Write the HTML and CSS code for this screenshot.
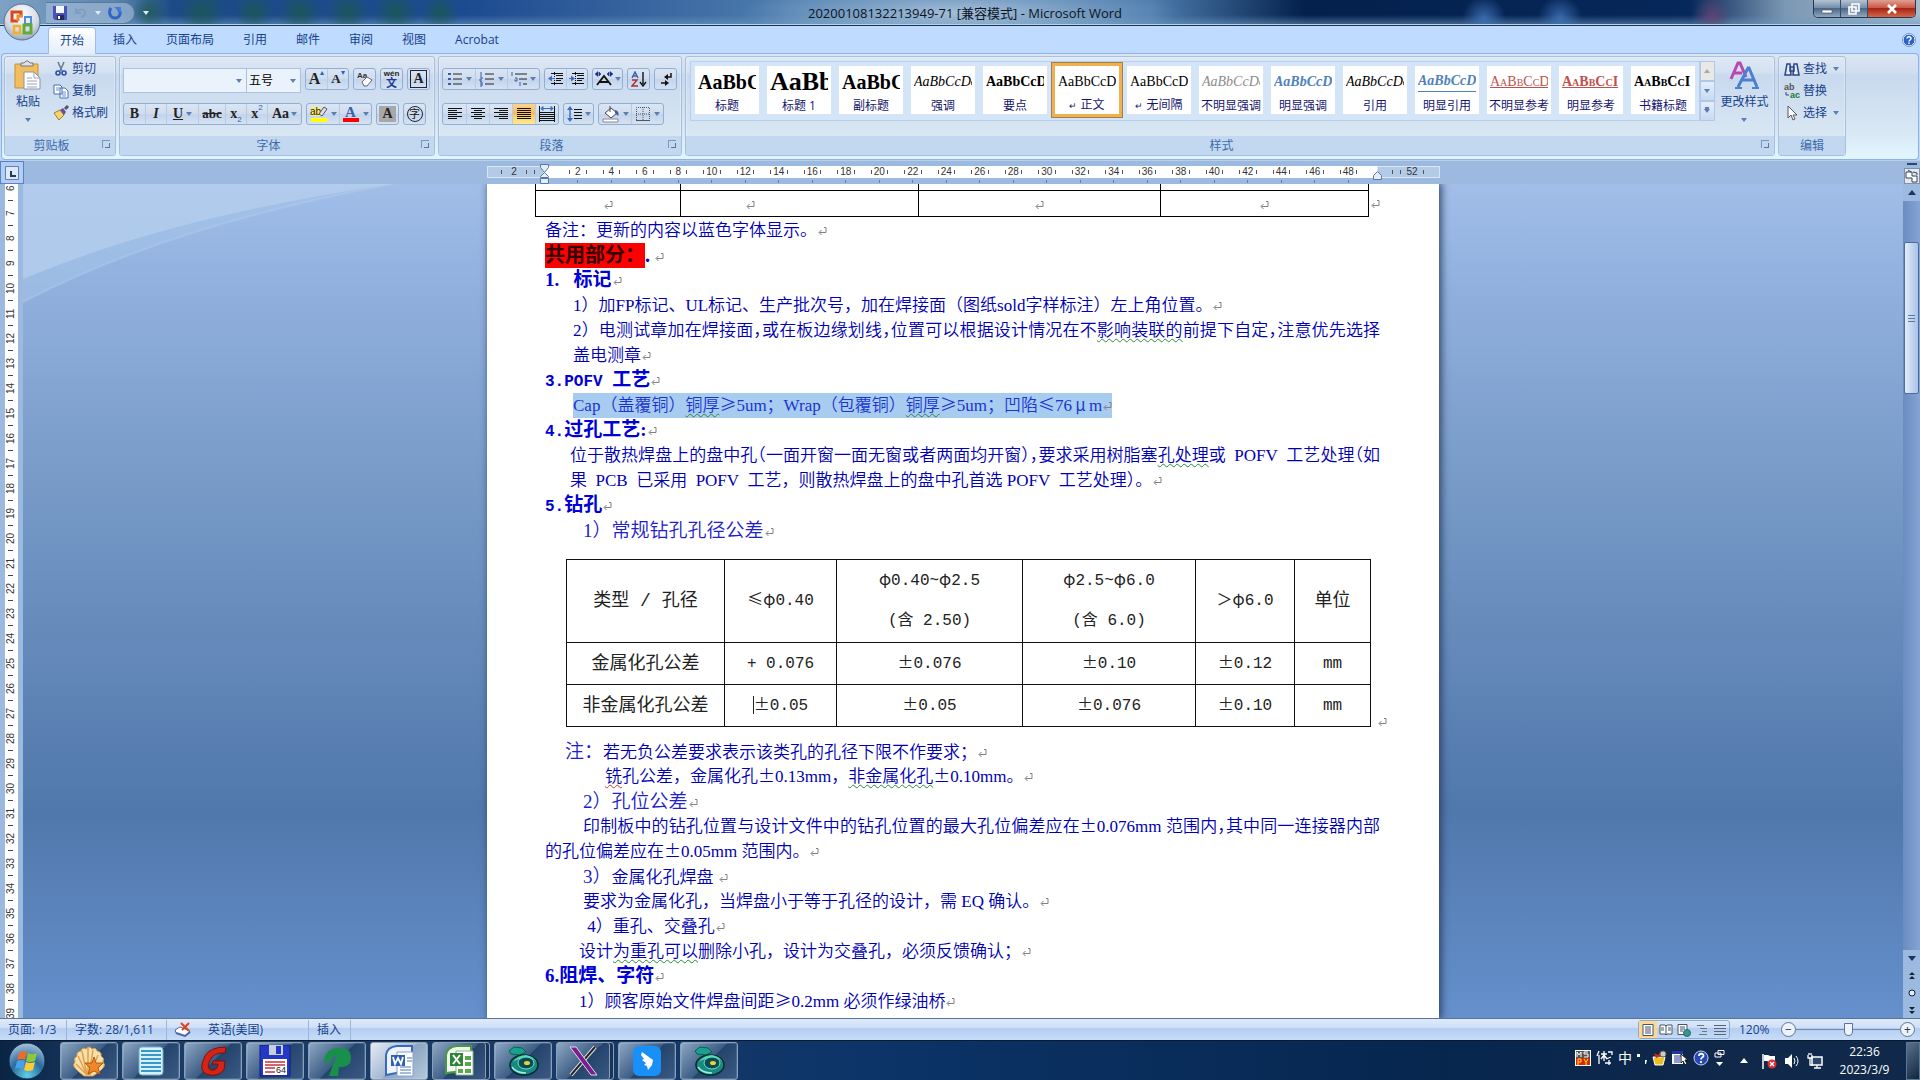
FILE: index.html
```html
<!DOCTYPE html>
<html lang="zh-CN">
<head>
<meta charset="utf-8">
<title>20200108132213949-71 [兼容模式] - Microsoft Word</title>
<link rel="stylesheet" href="styles.css">
</head>
<body>
<header class="titlebar">
  <div class="qat">
    <button aria-label="保存"><svg width="14" height="14" viewBox="0 0 14 14"><path d="M0 0h14v14H2l-2-2z" fill="#4a52b8"/><path d="M3 0h8v7H3z" fill="#f4f6ff"/><path d="M4 9h7v5H4z" fill="#222a60"/><path d="M5 10h2v3H5z" fill="#fff"/></svg></button>
    <button aria-label="撤消"><svg width="14" height="14" viewBox="0 0 14 14"><path d="M2 2v5h5M3 6c3-4 9-3 8 2-1 2-3 3-4 3" fill="none" stroke="#7f9cc4" stroke-width="2"/></svg></button>
    <i class="dd light"></i>
    <button aria-label="恢复"><svg width="14" height="14" viewBox="0 0 14 14"><path d="M3 2c-3 4-1 10 4 10s7-6 3-9" fill="none" stroke="#2f66c8" stroke-width="3"/><path d="M6 1h7v6z" fill="#3f7ae0"/></svg></button>
  </div>
  <i class="dd light bar"></i>
  <h1>20200108132213949-71 [兼容模式] - Microsoft Word</h1>
  <div class="winbtns">
    <button aria-label="最小化"><svg width="12" height="12" viewBox="0 0 12 12"><path d="M1 7h10v3H1z" fill="#fff" stroke="#445" stroke-width=".6"/></svg></button>
    <button aria-label="还原"><svg width="12" height="12" viewBox="0 0 12 12"><path d="M4 1h7v7H4zM1 4h7v7H1z" fill="#8fa3b8" stroke="#fff" stroke-width="1.6"/></svg></button>
    <button class="close" aria-label="关闭"><svg width="12" height="12" viewBox="0 0 12 12"><path d="M2 2l8 8M10 2l-8 8" stroke="#fff" stroke-width="2.6"/></svg></button>
  </div>
</header>
<button class="orb" aria-label="Office 按钮"><svg width="38" height="38" viewBox="0 0 38 38"><defs><radialGradient id="og" cx=".5" cy=".3" r=".75"><stop offset="0" stop-color="#fff"/><stop offset=".6" stop-color="#d4dbe6"/><stop offset="1" stop-color="#8e9db5"/></radialGradient></defs><circle cx="19" cy="19" r="18" fill="url(#og)" stroke="#5e6f8c"/><g fill="none" stroke-width="3"><path d="M18 12v-3h-9v9h6" stroke="#d8481c"/><path d="M15 18v-5h5" stroke="#ec8a2a"/><path d="M22 14h6v7h-6z" stroke="#4f8fd8" stroke-width="2"/><path d="M11 23h6v7h-6z" stroke="#f4b02a" stroke-width="2.5"/><path d="M21 22h7v8h-7z" stroke="#62aa38"/></g></svg></button>

<nav class="tabs">
  <button class="on">开始</button><button>插入</button><button>页面布局</button><button>引用</button><button>邮件</button><button>审阅</button><button>视图</button><button>Acrobat</button>
  <button class="help" aria-label="帮助"><svg width="14" height="14" viewBox="0 0 14 14"><circle cx="7" cy="7" r="6" fill="#2a62cc" stroke="#fff"/><circle cx="7" cy="7" r="6.6" fill="none" stroke="#5c7cb0" stroke-width=".7"/><path d="M5 5.500c0-2.500 4-2.500 4 0 0 1.500-2 1.500-2 3M7 9.500v1.500" fill="none" stroke="#fff" stroke-width="1.500"/></svg></button>
</nav>

<section class="ribbon">
  <div class="group clip">
    <div class="gbody">
      <button class="big"><svg width="28" height="30" viewBox="0 0 28 30"><path d="M1 4h23v24H1z" fill="#f0be5e" stroke="#c89038"/><path d="M7 6V3h3l2-2h2l2 2h3v3z" fill="#dde1e6" stroke="#777"/><path d="M10 12h10l6 6v11H10z" fill="#fff" stroke="#8a93a8"/><path d="M20 12v6h6M13 18h5M13 21h10M13 24h10M13 27h10" fill="none" stroke="#98a4c0"/></svg><span>粘贴</span><i class="dd"></i></button>
      <div class="stack">
        <button><svg width="16" height="16" viewBox="0 0 16 16"><path d="M5 1l4 9M11 1L7 10" stroke="#6a7c98" stroke-width="1.600"/><circle cx="5" cy="12" r="2" fill="none" stroke="#2a50a8" stroke-width="1.600"/><circle cx="11" cy="12" r="2" fill="none" stroke="#2a50a8" stroke-width="1.600"/></svg>剪切</button>
        <button><svg width="16" height="16" viewBox="0 0 16 16"><path d="M1 2h6l2 2v7H1zM7 5h5l3 3v7H7z" fill="#fff" stroke="#4a6cb0"/><path d="M3 5h4M3 7h3M9 9h4M9 11h4M9 13h4" stroke="#6a8cd0"/></svg>复制</button>
        <button><svg width="16" height="16" viewBox="0 0 16 16"><path d="M1 8l6-3 4 5-5 5z" fill="#f4d470" stroke="#a08020"/><path d="M7 5l3-2 3 4-2 3z" fill="#6a4ca8"/><path d="M12 4l3-3" stroke="#556" stroke-width="3"/></svg>格式刷</button>
      </div>
    </div>
    <div class="glabel more-opts">剪贴板<i class="launch"></i></div>
  </div>

  <div class="group font">
    <div class="gbody rows">
      <div class="row">
        <div class="combos"><select class="fname" aria-label="字体"><option></option></select><select class="fsize" aria-label="字号"><option>五号</option></select></div>
        <div class="bg"><button class="s big-a" aria-label="增大字体">A<sup>▴</sup></button><button class="s small-a" aria-label="缩小字体">A<sup>▾</sup></button></div>
        <div class="bg"><button aria-label="清除格式"><svg width="18" height="18" viewBox="0 0 18 18"><text x="1" y="8" font-size="8" font-weight="bold" font-family="Liberation Sans" fill="#334">Aa</text><path d="M6 12l5-5 5 3-5 6H8z" fill="#fff" stroke="#667"/></svg></button></div>
        <div class="bg"><button class="py" aria-label="拼音指南"><small>wén</small><b>文</b></button></div>
        <div class="bg"><button class="s boxed" aria-label="字符边框"><span>A</span></button></div>
      </div>
      <div class="row">
        <div class="bg"><button class="s">B</button><button class="s it">I</button><button class="s un w32"><u>U</u><i class="dd"></i></button><button class="s st">abc</button><button class="s">x<sub>2</sub></button><button class="s">x<sup>2</sup></button><button class="s aa">Aa<i class="dd"></i></button></div>
        <div class="bg"><button class="w32" aria-label="突出显示"><svg width="18" height="18" viewBox="0 0 18 18"><path d="M1 2h10v9H1z" fill="#ffef60"/><text x="0" y="10" font-size="10" font-family="Liberation Sans" fill="#223">ab</text><path d="M9 9l5-7 3 2-5 7z" fill="#dde" stroke="#556"/><path d="M1 13h16v4H1z" fill="#ff0"/></svg><i class="dd"></i></button><button class="w32" aria-label="字体颜色"><svg width="18" height="18" viewBox="0 0 18 18"><text x="3" y="12" font-size="15" font-weight="bold" font-family="Liberation Serif" fill="#3a62a8">A</text><path d="M1 13h16v4H1z" fill="#f00"/></svg><i class="dd"></i></button></div>
        <div class="bg"><button class="s shade" aria-label="字符底纹"><span>A</span></button></div>
        <div class="bg"><button class="circ" aria-label="带圈字符"><span>字</span></button></div>
      </div>
    </div>
    <div class="glabel more-opts">字体<i class="launch"></i></div>
  </div>

  <div class="group para">
    <div class="gbody rows">
      <div class="row">
        <div class="bg">
          <button class="w32" aria-label="项目符号"><svg width="16" height="16" viewBox="0 0 16 16"><path d="M6 3h9M6 8h9M6 13h9" stroke="#222"/><path d="M1 2h3v2H1zM1 7h3v2H1zM1 12h3v2H1z" fill="#3a5ca8"/></svg><i class="dd"></i></button>
          <button class="w32" aria-label="编号"><svg width="16" height="16" viewBox="0 0 16 16"><path d="M6 3h9M6 8h9M6 13h9" stroke="#222"/><path d="M2 1v4M1 6h2v2H1v2h2M1 11h2v4H1M1 13h2" fill="none" stroke="#3a5ca8"/></svg><i class="dd"></i></button>
          <button class="w32" aria-label="多级列表"><svg width="16" height="16" viewBox="0 0 16 16"><path d="M4 3h12M8 8h8M12 13h4" stroke="#222"/><path d="M1 1v4M4 7h2v3H4V8.500M9 11v4" fill="none" stroke="#3a5ca8"/></svg><i class="dd"></i></button>
        </div>
        <div class="bg">
          <button aria-label="减少缩进量"><svg width="16" height="16" viewBox="0 0 16 16"><path d="M3 2.500h12M8 4.500h7M8 7.500h7M8 9.500h5M3 12.500h12" stroke="#111"/><path d="M6.500 1v14" stroke="#111" stroke-dasharray="1 1"/><path d="M0 7.500l4-3v6zM4 7h3v1H4z" fill="#3a6cc8"/></svg></button>
          <button aria-label="增加缩进量"><svg width="16" height="16" viewBox="0 0 16 16"><path d="M3 2.500h12M8 4.500h7M8 7.500h7M8 9.500h5M3 12.500h12" stroke="#111"/><path d="M6.500 1v14" stroke="#111" stroke-dasharray="1 1"/><path d="M6 7.500l-4-3v6zM0 7h2v1H0z" fill="#3a6cc8"/></svg></button>
        </div>
        <div class="bg"><button class="w30" aria-label="中文版式"><svg width="18" height="16" viewBox="0 0 18 16"><path d="M2 14L9 5l7 9M5 11h8" fill="none" stroke="#111" stroke-width="1.800"/><path d="M0 3l3-2.500v5zM6 3L4 1v4zM18 3l-3-2.500v5zM12 3l2-2v4z" fill="#1c2c88" stroke="#1c2c88" stroke-width=".5"/></svg><i class="dd"></i></button></div>
        <div class="bg"><button aria-label="排序"><svg width="16" height="16" viewBox="0 0 16 16"><path d="M1 7l3-6 3 6M2 5h4" fill="none" stroke="#3a5ca8" stroke-width="1.400"/><path d="M1 9h5l-5 6h6" fill="none" stroke="#b03030" stroke-width="1.400"/><path d="M12 1v12M9 11l3 4 3-4" fill="none" stroke="#111" stroke-width="1.400"/></svg></button></div>
        <div class="bg"><button aria-label="显示编辑标记"><svg width="16" height="16" viewBox="0 0 16 16"><path d="M13 2v4H8M3 12h6" fill="none" stroke="#111" stroke-width="1.500"/><path d="M6 6l4-3v6zM11 12L7 9v6z" fill="#111"/></svg></button></div>
      </div>
      <div class="row">
        <div class="bg al">
          <button aria-label="左对齐"><svg width="16" height="16" viewBox="0 0 16 16"><path d="M1 2.500h14M1 4.500h9M1 6.500h14M1 8.500h9M1 10.500h14M1 12.500h9" stroke="#111"/></svg></button>
          <button aria-label="居中"><svg width="16" height="16" viewBox="0 0 16 16"><path d="M1 2.500h14M4 4.500h8M1 6.500h14M4 8.500h8M1 10.500h14M4 12.500h8" stroke="#111"/></svg></button>
          <button aria-label="右对齐"><svg width="16" height="16" viewBox="0 0 16 16"><path d="M1 2.500h14M6 4.500h9M1 6.500h14M6 8.500h9M1 10.500h14M6 12.500h9" stroke="#111"/></svg></button>
          <button class="sel" aria-label="两端对齐"><svg width="16" height="16" viewBox="0 0 16 16"><path d="M1 2.500h14M1 4.500h14M1 6.500h14M1 8.500h14M1 10.500h14M1 12.500h14" stroke="#111"/></svg></button>
          <button aria-label="分散对齐"><svg width="16" height="16" viewBox="0 0 16 16"><path d="M1 6.500h14M1 8.500h14M1 10.500h14M1 12.500h14M1 14.500h14M.5 0v16M15.500 0v16" stroke="#111"/><path d="M2 2.500h12M2 2.500l2-2v4zM14 2.500l-2-2v4z" fill="#3a6cc8" stroke="#3a6cc8"/></svg></button>
        </div>
        <div class="bg"><button class="w30" aria-label="行距"><svg width="16" height="16" viewBox="0 0 16 16"><path d="M7 3.500h8M7 6.500h8M7 9.500h8M7 12.500h8" stroke="#111"/><path d="M3 3v10" stroke="#3a6cc8" stroke-width="1.400"/><path d="M3 0l3 4H0zM3 16l3-4H0z" fill="#3a6cc8"/></svg><i class="dd"></i></button></div>
        <div class="bg"><button class="w32" aria-label="底纹"><svg width="18" height="18" viewBox="0 0 18 18"><path d="M3 8l6-5 6 5-6 5z" fill="#fff" stroke="#445"/><path d="M8 7V1" stroke="#445"/><path d="M13 5c4 1 4 4 3 6l-3-3z" fill="#3a5ca8"/><path d="M1 14h15v3H1z" fill="#fff" stroke="#889"/></svg><i class="dd"></i></button><button class="w32" aria-label="边框"><svg width="16" height="16" viewBox="0 0 16 16"><path d="M1.500 14V1.500h13V14M8 1v13M1 8h14" fill="none" stroke="#556" stroke-dasharray="1 1"/><path d="M1 14.500h14" stroke="#556"/></svg><i class="dd"></i></button></div>
      </div>
    </div>
    <div class="glabel more-opts">段落<i class="launch"></i></div>
  </div>

  <div class="group styles">
    <div class="gbody">
      <div class="gallery">
        <button><span class="pv p21">AaBbC</span>标题</button>
        <button><span class="pv p26">AaBb</span>标题 1</button>
        <button><span class="pv p21">AaBbC</span>副标题</button>
        <button><span class="pv it">AaBbCcDc</span>强调</button>
        <button><span class="pv bd">AaBbCcD</span>要点</button>
        <button class="cur"><span class="pv">AaBbCcDc</span><span><small>↵</small> 正文</span></button>
        <button><span class="pv">AaBbCcDc</span><span><small>↵</small> 无间隔</span></button>
        <button><span class="pv it gray">AaBbCcDc</span>不明显强调</button>
        <button><span class="pv it bd blue">AaBbCcDc</span>明显强调</button>
        <button><span class="pv it">AaBbCcDc</span>引用</button>
        <button><span class="pv it bd blue ul">AaBbCcDc</span>明显引用</button>
        <button><span class="pv sc red"><u>AaBbCcDd</u></span>不明显参考</button>
        <button><span class="pv sc red bd"><u>AaBbCcI</u></span>明显参考</button>
        <button><span class="pv sc bd">AaBbCcI</span>书籍标题</button>
      </div>
      <div class="gscroll"><button aria-label="上一行"><i class="dd up"></i></button><button aria-label="下一行"><i class="dd"></i></button><button aria-label="其他"><i class="dd more"></i></button></div>
      <button class="big change"><svg width="30" height="30" viewBox="0 0 30 30"><path d="M2 19L9 3h2l6 14M5 13h8" fill="none" stroke="#b848b0" stroke-width="3"/><path d="M9 27L19 8h1l8 19M13 20h11" fill="none" stroke="#4a80d0" stroke-width="3"/><path d="M6 28h7M23 28h7" stroke="#4a80d0" stroke-width="2"/></svg><span>更改样式</span><i class="dd"></i></button>
    </div>
    <div class="glabel more-opts">样式<i class="launch"></i></div>
  </div>

  <div class="group edit">
    <div class="gbody">
      <div class="stack">
        <button><svg width="16" height="16" viewBox="0 0 16 16"><path d="M3 3h3l1 11H1zM10 3h3l2 11H9zM6 6h4v4H6z" fill="#e6ecf6" stroke="#2a4488" stroke-width="1.500"/></svg>查找<i class="dd"></i></button>
        <button><svg width="16" height="16" viewBox="0 0 16 16"><text x="0" y="7" font-size="9" font-weight="bold" font-family="Liberation Sans" fill="#555">ab</text><text x="6" y="15" font-size="9" font-weight="bold" font-family="Liberation Sans" fill="#1a7a30">ac</text><path d="M2 9v3h3" fill="none" stroke="#2a4488"/></svg>替换</button>
        <button><svg width="16" height="16" viewBox="0 0 16 16"><path d="M4 1v12l3-3 2 5 2-1-2-4h4z" fill="#fff" stroke="#556"/></svg>选择<i class="dd"></i></button>
      </div>
    </div>
    <div class="glabel">编辑</div>
  </div>
</section>

<div class="rulerrow">
  <button class="tabstop" aria-label="制表符"><svg width="14" height="14" viewBox="0 0 14 14"><path d="M.5.5h13v13H.5z" fill="#dfe9f6" stroke="#5a80c0"/><path d="M6 5v5h5" fill="none" stroke="#223a66" stroke-width="2"/></svg></button>
  <div class="hruler">
    <div class="hmargin l"><b>2</b><i></i></div>
    <div class="hwhite">
      <b>2</b><b>4</b><b>6</b><b>8</b><b>10</b><b>12</b><b>14</b><b>16</b><b>18</b><b>20</b><b>22</b><b>24</b><b>26</b><b>28</b><b>30</b><b>32</b><b>34</b><b>36</b><b>38</b><b>40</b><b>42</b><b>44</b><b>46</b><b>48</b>
    </div>
    <div class="hmargin r"><i></i><b>52</b></div>
    <svg class="mk lm" width="9" height="20" viewBox="0 0 9 20"><path d="M.5.5h8v3l-4 5-4-5zM.5 13.500v-1l4-4 4 4v1zM.5 14.500h8v5h-8z" fill="#e4edf8" stroke="#5a78a8"/></svg>
    <svg class="mk rm" width="9" height="9" viewBox="0 0 9 9"><path d="M.5 8.500v-4l4-4 4 4v4z" fill="#e4edf8" stroke="#5a78a8"/></svg>
  </div>
  <div class="corner"><i></i><button aria-label="标尺"><svg width="14" height="14" viewBox="0 0 14 14"><path d="M1 3h6v4h5v6H7V9H1z" fill="#fff" stroke="#345"/><path d="M3 1l3 2M8 3l4 1v2" stroke="#345" fill="none"/></svg></button></div>
</div>

<main class="work">
  <div class="vruler"><div class="vnums"><b>6</b><b>7</b><b>8</b><b>9</b><b>10</b><b>11</b><b>12</b><b>13</b><b>14</b><b>15</b><b>16</b><b>17</b><b>18</b><b>19</b><b>20</b><b>21</b><b>22</b><b>23</b><b>24</b><b>25</b><b>26</b><b>27</b><b>28</b><b>29</b><b>30</b><b>31</b><b>32</b><b>33</b><b>34</b><b>35</b><b>36</b><b>37</b><b>38</b><b>39</b></div></div>
  <div class="canvas">
    <svg class="swoosh" width="460" height="120" viewBox="0 0 460 120"><path d="M0 0H370Q150 40 0 118z" fill="#a4c4e8" opacity=".55"/><path d="M0 0H370Q150 32 0 95z" fill="#bdd2f0" opacity=".6"/><path d="M370 0Q150 40 0 118" fill="none" stroke="#b4cdf0" stroke-width="2" opacity=".4"/></svg>
    <article class="page">
      <div class="toprow">
        <table class="t1"><tbody><tr class="cut"><td></td><td></td><td></td><td></td></tr><tr><td><i class="ret"></i></td><td class="early"><i class="ret"></i></td><td><i class="ret"></i></td><td><i class="ret"></i></td></tr></tbody></table><i class="ret"></i>
      </div>
      <div class="text">
        <p>备注：更新的内容以蓝色字体显示。</p>
        <p class="hd"><mark>共用部分：</mark>.</p>
        <h2>1.&nbsp;&nbsp; 标记</h2>
        <p class="in28">1）加FP标记、UL标记、生产批次号，加在焊接面（图纸sold字样标注）左上角位置。</p>
        <p class="in28 full">2）电测试章加在焊接面<s>，</s>或在板边缘划线<s>，</s>位置可以根据设计情况在不<u class="g">影响装联的</u>前提下自定<s>，</s>注意优先选择</p>
        <p class="in28">盖电测章</p>
        <h2><code>3.POFV </code>工艺</h2>
        <p class="in28"><span class="pick">Cap（盖覆铜）<u class="g">铜厚</u><q>≥</q>5um；Wrap（包覆铜）<u class="g">铜厚</u><q>≥</q>5um；凹陷<q>≤</q>76<q class="em">μ</q>m</span></p>
        <h2><code>4.</code>过孔工艺:</h2>
        <p class="in25 full">位于散热焊盘上的盘中孔<s>（</s>一面开窗一面无窗或者两面均开窗<s>），</s>要求采用树脂塞<u class="g">孔处理</u>或&nbsp; POFV&nbsp; 工艺处理<s>（</s>如</p>
        <p class="in25">果&nbsp; PCB&nbsp; 已采用&nbsp; POFV&nbsp; 工艺，则散热焊盘上的盘中孔首选 POFV&nbsp; 工艺处理<s>）</s>。</p>
        <h2><code>5.</code>钻孔</h2>
        <p class="in38 lg">1）常规钻孔孔径公差</p>
      </div>
      <div class="figure">
        <table class="t2">
          <colgroup><col style="width:158px"><col style="width:112px"><col style="width:186px"><col style="width:173px"><col style="width:99px"><col style="width:76px"></colgroup>
          <tbody>
          <tr class="tall"><td>类型 / 孔径</td><td><q>≤</q><q>φ</q>0.40</td><td><q>φ</q>0.40~<q>φ</q>2.5<br>(含 2.50)</td><td><q>φ</q>2.5~<q>φ</q>6.0<br>(含 6.0)</td><td><q>＞</q><q>φ</q>6.0</td><td>单位</td></tr>
          <tr><td>金属化孔公差</td><td>+ 0.076</td><td><q>±</q>0.076</td><td><q>±</q>0.10</td><td><q>±</q>0.12</td><td>mm</td></tr>
          <tr><td>非金属化孔公差</td><td><span class="caret"></span><q>±</q>0.05</td><td><q>±</q>0.05</td><td><q>±</q>0.076</td><td><q>±</q>0.10</td><td>mm</td></tr>
          </tbody>
        </table><i class="ret"></i>
      </div>
      <div class="text">
        <p class="in20"><span class="lgi">注：</span>若无负公差要求表示该类孔的孔径下限不作要求；</p>
        <p class="in60"><u class="r">铣</u>孔公差，金属化孔<q>±</q>0.13mm，<u class="g">非金属化孔</u><q>±</q>0.10mm。</p>
        <p class="in38 lg">2）孔位公差</p>
        <p class="in38 full">印制板中的钻孔位置与设计文件中的钻孔位置的最大孔位偏差应在<q>±</q>0.076mm 范围内<s>，</s>其中同一连接器内部</p>
        <p>的孔位偏差应在<q>±</q>0.05mm 范围内。</p>
        <p class="in38"><span class="lgi">3）</span>金属化孔焊盘&nbsp;</p>
        <p class="in38">要求为金属化孔，当焊盘小于等于孔径的设计，需 EQ 确认。</p>
        <p class="in38">&nbsp;4）重孔、交叠孔</p>
        <p class="in34">设计<u class="g">为重孔可以</u>删除小孔，设计为交叠孔，必须反馈确认；</p>
        <h2>6.阻焊、字符</h2>
        <p class="in34">1）顾客原始文件焊盘间距<q>≥</q>0.2mm 必须作绿油桥</p>
      </div>
    </article>
  </div>
  <div class="vscroll">
    <button aria-label="向上滚动"><i class="tri up"></i></button>
    <div class="track"><div class="thumb"></div></div>
    <button aria-label="向下滚动"><i class="tri"></i></button>
    <button aria-label="前一页"><svg width="10" height="10" viewBox="0 0 10 10"><path d="M5 1l3 3H2zM5 5l3 3H2z" fill="#123"/></svg></button>
    <button aria-label="选择浏览对象"><svg width="10" height="10" viewBox="0 0 10 10"><circle cx="5" cy="5" r="3" fill="#dfeafc" stroke="#123"/></svg></button>
    <button aria-label="下一页"><svg width="10" height="10" viewBox="0 0 10 10"><path d="M5 5l3-3H2zM5 9l3-3H2z" fill="#123"/></svg></button>
  </div>
</main>

<footer class="status">
  <span class="c1">页面: 1/3</span><span class="c2">字数: 28/1,611</span>
  <span class="c3"><svg width="18" height="16" viewBox="0 0 18 16"><path d="M1 8l5-3 10 4-5 5-9-3z" fill="#fff" stroke="#4a68a8"/><path d="M2 11l9 3 5-4" fill="none" stroke="#4a68a8" stroke-width="2"/><path d="M7 1l8 8M15 1L8 8" stroke="#e0401c" stroke-width="2"/></svg>英语(美国)</span><span class="c4">插入</span>
  <div class="views">
    <button class="on" aria-label="页面视图"><svg width="14" height="14" viewBox="0 0 14 14"><path d="M2 1.500h10v11H2z" fill="#fff" stroke="#456"/><path d="M4 4h6M4 6h6M4 8h6M4 10h6" stroke="#456"/></svg></button>
    <button aria-label="阅读版式"><svg width="14" height="14" viewBox="0 0 14 14"><path d="M1 2h5l1 1 1-1h5v9H8l-1 1-1-1H1z" fill="#fff" stroke="#456"/><path d="M7 3v9M2 5h3M2 7h3M9 5h3M9 7h3" stroke="#456"/></svg></button>
    <button aria-label="Web 版式"><svg width="14" height="14" viewBox="0 0 14 14"><path d="M1 1.500h9v10H1z" fill="#fff" stroke="#456"/><path d="M3 4h5M3 6h5M3 8h3" stroke="#456"/><circle cx="10" cy="10" r="3.500" fill="#3a9a70" stroke="#2a60a8"/></svg></button>
    <button aria-label="大纲视图"><svg width="14" height="14" viewBox="0 0 14 14"><path d="M2 2.500h7M5 5.500h7M7 8.500h5M4 11.500h8" stroke="#678"/></svg></button>
    <button aria-label="普通视图"><svg width="14" height="14" viewBox="0 0 14 14"><path d="M1 2.500h12M1 5.500h12M1 8.500h12M1 11.500h12" stroke="#567"/></svg></button>
  </div>
  <output class="pct">120%</output>
  <button class="zb" aria-label="缩小">−</button>
  <input class="zoom" type="range" min="0" max="100" value="51" aria-label="显示比例">
  <button class="zb" aria-label="放大">+</button>
</footer>

<footer class="taskbar">
  <button class="start" aria-label="开始"><svg width="38" height="38" viewBox="0 0 38 38"><defs><radialGradient id="sg" cx=".5" cy=".9" r=".9"><stop offset="0" stop-color="#5fd0e8"/><stop offset=".5" stop-color="#2a6a9c"/><stop offset="1" stop-color="#a8c4dc"/></radialGradient></defs><circle cx="19" cy="19" r="18" fill="url(#sg)" stroke="#0c2a4c"/><path d="M11 11q4-3 8-1l-2 8q-4-2-8 0z" fill="#ee6a2c"/><path d="M20 11q4 2 9 0l-2 8q-5 2-9 0z" fill="#8cc83c"/><path d="M9 19q4-2 8 0l-2 8q-4-2-8 0z" fill="#4aa0e8"/><path d="M18 20q4 2 9 0l-2 8q-5 2-9 0z" fill="#fccc34"/></svg></button>
  <div class="tasks">
    <button aria-label="贝壳"><svg width="32" height="32" viewBox="0 0 32 32"><path d="M11 31l-5-4-4-4q-3-3 0-6-2-4 2-6-1-4 4-5 1-4 5-2 3-4 6 0 4-2 5 2 5 1 4 5 4 2 2 6 3 3 0 6l-4 4-6 4z" fill="#f9dfa8" stroke="#d09848"/><path d="M14 30L3 19M14 30L5 11M14 30L9 6M15 30V3M16 30l4-25M17 30l8-20" stroke="#e0a050" fill="none" stroke-width="1.500"/><path d="M21 12l2 6 7 0-5 5 2 6-6-3-6 3 2-6-5-5h7z" fill="#f08828" stroke="#b85810"/></svg></button>
    <button aria-label="记事"><svg width="32" height="32" viewBox="0 0 32 32"><rect x="4" y="2" width="24" height="28" rx="3" fill="#d8f0fa" stroke="#6ab0d0"/><path d="M6 6h20M6 10h20M6 14h20M6 18h20M6 22h20M6 26h20" stroke="#3a98c8" stroke-width="2"/></svg></button>
    <button aria-label="G"><svg width="32" height="32" viewBox="0 0 32 32"><path d="M29 2Q13 2 8 11q-7 14 1 18 11 4 18-4l1-9H16l-1 3h6q-1 7-7 6-5-2-1-10Q17 7 28 8z" fill="#d42418" stroke="#7c100c"/></svg></button>
    <button aria-label="64"><svg width="32" height="32" viewBox="0 0 32 32"><path d="M1 0h30v31H1z" fill="#2438c8" stroke="#101c80"/><path d="M10 0h14v10H10z" fill="#c8d0e0"/><path d="M17 1h5v8h-5z" fill="#2438c8"/><path d="M4 14h24v16H4z" fill="#fff"/><path d="M6 17h20M6 20h20M6 23h10M6 27h10" stroke="#c83040" stroke-width="1.500"/><text x="17" y="28" font-size="9" font-family="Liberation Sans" fill="#222">64</text></svg></button>
    <button aria-label="P"><svg width="32" height="32" viewBox="0 0 32 32"><path d="M3 18Q3 5 15 3h8q7 2 7 10 0 8-8 9h-4l-1 9H8l5-14 3-6q-7 0-8 9-2-4-5-2z" fill="#18904c"/></svg></button>
    <button class="active" aria-label="Word"><svg width="32" height="32" viewBox="0 0 32 32"><path d="M3 30V10Q4 2 14 1h15v24z" fill="#eef3fc" stroke="#3868c0" stroke-width="2"/><path d="M14 7h16v24H14z" fill="#fff" stroke="#88a0c8"/><path d="M17 22h11M17 25h11M17 28h11M24 13h5M24 16h5" stroke="#4a78c0"/><path d="M8 10h14v11H8z" fill="#2f5fb4"/><path d="M10 12l2 7 3-6 3 6 2-7" stroke="#fff" stroke-width="1.800" fill="none"/></svg></button>
    <button class="multi" aria-label="Excel"><svg width="32" height="32" viewBox="0 0 32 32"><path d="M3 28V10Q4 2 14 1h14v24z" fill="#eef8ec" stroke="#4a9840" stroke-width="2"/><path d="M13 6h17v24H13z" fill="#fff" stroke="#8ab488"/><path d="M22 11h6v4h-6zM22 17h6v4h-6zM15 24h5v4h-5zM22 24h6v4h-6z" fill="#5aa848"/><path d="M7 8h13v13H7z" fill="#2f8438"/><path d="M10 10l7 9M17 10l-7 9" stroke="#fff" stroke-width="2"/></svg></button>
    <button aria-label="CAM"><svg width="32" height="32" viewBox="0 0 32 32"><path d="M2 6l5-4 8 1 4 4-6 3-9-1z" fill="#18a090" stroke="#064"/><ellipse cx="17" cy="20" rx="14" ry="10" fill="#188880" stroke="#042c30" stroke-width="1.500"/><path d="M6 17q5-7 13-7 8 1 11 8-3-5-10-5-8 0-14 4z" fill="#50d8b8"/><ellipse cx="19" cy="18" rx="8" ry="6" fill="#0c4c50" stroke="#6ee0c8"/><ellipse cx="20" cy="18" rx="3" ry="2" fill="#e8d040"/><path d="M5 22q4 6 14 6" stroke="#9af0e0" stroke-width="1.500" fill="none"/></svg></button>
    <button class="multi" aria-label="X"><svg width="32" height="32" viewBox="0 0 32 32"><path d="M28 2L4 30" stroke="#eee" stroke-width="4"/><path d="M28 2L4 30" stroke="#222" stroke-width="2"/><path d="M3 2h6l21 28h-6z" fill="#7c1c90" stroke="#ddd"/></svg></button>
    <button aria-label="飞书"><svg width="32" height="32" viewBox="0 0 32 32"><rect x="2" y="1" width="28" height="30" rx="6" fill="#1890f8"/><path d="M11 7l11 8-1 5-4 5-1-4-3-1 2-2-4-3 2-1-3-4z" fill="#fff"/></svg></button>
    <button aria-label="CAM 2"><svg width="32" height="32" viewBox="0 0 32 32"><path d="M2 6l5-4 8 1 4 4-6 3-9-1z" fill="#18a090" stroke="#064"/><ellipse cx="17" cy="20" rx="14" ry="10" fill="#188880" stroke="#042c30" stroke-width="1.500"/><path d="M6 17q5-7 13-7 8 1 11 8-3-5-10-5-8 0-14 4z" fill="#50d8b8"/><ellipse cx="19" cy="18" rx="8" ry="6" fill="#0c4c50" stroke="#6ee0c8"/><ellipse cx="20" cy="18" rx="3" ry="2" fill="#e8d040"/><path d="M5 22q4 6 14 6" stroke="#9af0e0" stroke-width="1.500" fill="none"/></svg></button>
  </div>
  <div class="ime">
    <svg width="16" height="16" viewBox="0 0 16 16"><path d="M0 0h16v16H0z" fill="#fff"/><path d="M1 1h14v7H1z" fill="#555"/><path d="M1 8h7v7H1z" fill="#e02020"/><path d="M8 8h7v7H8z" fill="#c83010"/><path d="M2 7V2l2 3 2-3v5M13 2H9v2h4v3H9" fill="none" stroke="#fff"/><path d="M3 15V9h3v3H3M9 9l2 3 2-3M11 12v3" fill="none" stroke="#fe0"/></svg>
    <svg width="17" height="16" viewBox="0 0 17 16"><path d="M3 1L1 6M3 5v9M5 4h6M8 1v10M8 5L5 9M8 5l3 4M10 9l5-2M12 2h4v3M9 13l6 0M13 10v5" fill="none" stroke="#fff" stroke-width="1.300"/></svg>
    <span>中</span>
    <svg width="10" height="16" viewBox="0 0 10 16"><path d="M0 4h3v3H0zM8 10h2l-1 4H8z" fill="#fff"/></svg>
    <svg width="15" height="16" viewBox="0 0 15 16"><path d="M1 7h12l-2 8H3z" fill="#e8c020" stroke="#fff"/><path d="M4 8l-2-5 4 2 3-4 1 5" fill="#d02818"/><circle cx="11" cy="4" r="3" fill="#ccc" stroke="#665"/></svg>
    <svg width="16" height="16" viewBox="0 0 16 16"><path d="M0 1h11v13H0z" fill="#fff"/><path d="M0 1h11v3H0z" fill="#2038a0"/><path d="M2 6h7M2 8h6M2 10h6M2 12h6" stroke="#2038a0"/><path d="M9 4v9l2-2 2 4 2-1-2-4h3z" fill="#fff" stroke="#111"/></svg>
    <svg width="16" height="16" viewBox="0 0 16 16"><circle cx="8" cy="8" r="7" fill="#2846b8" stroke="#c8d4f0"/><path d="M6 6c0-3 5-3 4.500 0-.5 1.500-2.500 1.500-2.500 3.500M8 11v2" fill="none" stroke="#fff" stroke-width="1.800"/></svg>
    <svg width="11" height="18" viewBox="0 0 11 18"><path d="M4 1.500h6v4H4zM1 4h6v4H1z" fill="#0c2448" stroke="#fff"/><path d="M2 13h7l-3.500 4z" fill="#fff"/></svg>
  </div>
  <div class="tray">
    <i class="tri up w"></i>
    <svg width="16" height="16" viewBox="0 0 16 16"><path d="M2 1v15" stroke="#fff" stroke-width="1.500"/><path d="M3 2h4l2 1h5v6H8L6 8H3z" fill="#fff"/><circle cx="11" cy="11" r="4.500" fill="#d83030"/><path d="M9 9l4 4M13 9l-4 4" stroke="#fff" stroke-width="1.300"/></svg>
    <svg width="16" height="16" viewBox="0 0 16 16"><path d="M1 5h3l4-4v14l-4-4H1z" fill="#fff"/><path d="M10 5q2 3 0 6M12 3q4 5 0 10" fill="none" stroke="#fff"/></svg>
    <svg width="16" height="16" viewBox="0 0 16 16"><path d="M5 4h10v8H5z" fill="#2c4468" stroke="#fff" stroke-width="1.500"/><path d="M7 15h7M10 12v3M1 2v3h4V2M3 5v7h3M2 0v2M4 0v2" fill="none" stroke="#fff" stroke-width="1.300"/></svg>
  </div>
  <div class="clock"><time>22:36</time><time>2023/3/9</time></div>
  <button class="desk" aria-label="显示桌面"></button>
</footer>
</body>
</html>
```
FILE: styles.css
```css
* { box-sizing: border-box; }
html, body { margin: 0; height: 100%; }
body {
  display: flex; flex-direction: column; overflow: hidden; position: relative;
  font: 12px/16px "Open Sans", "Noto Sans CJK SC", sans-serif; color: #15428b; background: #9cbae0;
}
button, select, input { font: inherit; color: inherit; margin: 0; padding: 0; border: 0; background: none; }
button { display: flex; align-items: center; justify-content: center; white-space: nowrap; }
svg { display: block; flex: none; }

.dd { display: inline-block; flex: none; border: 3px solid transparent; border-top: 4px solid #5a7fb5; border-bottom: 0; }
.dd.light { border-top-color: #dfe9f5; }
.dd.up { border-top: 0; border-bottom: 4px solid #a8a8a8; }
.dd.more { box-shadow: 0 -3px 0 -1px #5a7fb5; }
.dd.bar { margin-left: 8px; }

/* title bar */
.titlebar {
  flex: none; height: 26px; display: flex; align-items: center; padding-left: 46px; border-bottom: 1px solid #16324e;
  box-shadow: inset 0 -1px #b8d4ea;
  background:
    radial-gradient(ellipse 220px 30px at 50% 50%, #a9c3dcee, #a9c3dc00),
    radial-gradient(circle 18px at 150px 12px, #1c5a50cc, #1c5a5000),
    radial-gradient(circle 24px at 202px 12px, #1c5a50cc, #1c5a5000),
    radial-gradient(circle 20px at 254px 12px, #1c5a50cc, #1c5a5000),
    radial-gradient(circle 22px at 300px 12px, #1c5a50cc, #1c5a5000),
    radial-gradient(circle 22px at 348px 12px, #1c5a50cc, #1c5a5000),
    radial-gradient(circle 24px at 396px 12px, #1c5a50cc, #1c5a5000),
    radial-gradient(circle 20px at 440px 12px, #1c5a50cc, #1c5a5000),
    radial-gradient(circle 22px at 1484px 18px, #4478c0cc, #4478c000),
    radial-gradient(circle 22px at 1560px 18px, #4478c0cc, #4478c000),
    radial-gradient(circle 20px at 1712px 16px, #6a4474cc, #6a447400),
    linear-gradient(#06205000 60%, #6c9ac099),
    linear-gradient(90deg, #7ea2c4 0, #5a86ac 6%, #1c4a86 9%, #1c4a90 24%, #34609c 32%, #5080b0 42%, #4c7cac 60%, #04204c 68%, #06285a 88%, #7c98b4 93%, #a4bcd0 100%);
}
.qat { display: flex; align-items: center; gap: 7px; height: 22px; padding: 0 12px 0 7px; border: 1px solid #5a789c; border-left: 0; border-radius: 0 11px 11px 0; background: #a8c0dc99; }
h1 { flex: 1; margin: 0; padding-right: 32px; text-align: center; font: 13px/16px "Open Sans", "Noto Sans CJK SC", sans-serif; color: #0c1420; }
.winbtns { display: flex; align-self: flex-start; height: 18px; margin-right: 4px; border: 1px solid #28384c; border-top: 0; border-radius: 0 0 5px 5px; overflow: hidden; }
.winbtns button { width: 27px; border-right: 1px solid #3a4c64; background: linear-gradient(#b4c4d4, #7088a4 50%, #4c6888 50%, #90a8c0); }
.winbtns .close { width: 47px; border: 0; background: linear-gradient(#e0a090, #c85040 50%, #a82414 50%, #d06848); }
.orb { position: absolute; left: 3px; top: 3px; z-index: 2; }

/* tabs */
.tabs { flex: none; height: 27px; display: flex; gap: 5px; align-items: stretch; padding: 1px 4px 0 48px; background: #bfdbff; }
.tabs button { padding: 0 12px; margin-bottom: 1px; }
.tabs .on { background: linear-gradient(#fff, #e4eefa); border: 1px solid #9cbde4; border-bottom: 0; border-radius: 4px 4px 0 0; padding: 0 11px; margin-bottom: -1px; z-index: 1; }
.tabs .help { margin-left: auto; padding: 0; }

/* ribbon */
.ribbon {
  flex: none; display: flex; gap: 3px; height: 107px; margin: 0 1px; padding: 2px 2px 3px; border: 1px solid #8db2e3; border-radius: 4px;
  background: linear-gradient(#dbe6f4, #cfddee 18%, #c9d9ed 20%, #d8e8f4 75%, #e3f6ff); outline: 2px solid #bfdbff;
}
.group { display: flex; flex-direction: column; border: 1px solid #a6c0de; border-radius: 3px; box-shadow: inset 0 0 0 1px #e8f0fa88; overflow: hidden; background: linear-gradient(#dfe9f5, #d3e0f0 16%, #c9d9ee 18%, #d9e7f3 80%); }
.gbody { flex: 1; display: flex; min-height: 0; }
.glabel { flex: none; height: 19px; display: flex; align-items: center; justify-content: center; position: relative; background: #c1d8f0; color: #3e6aaa; }
.glabel.more-opts { padding-right: 17px; }
.launch { position: absolute; right: 5px; top: 4px; width: 8px; height: 8px; border: 1px solid #7a98bc; border-right: 0; border-bottom: 0; }
.launch::after { content: ""; position: absolute; right: 0; bottom: 0; width: 4px; height: 4px; border: 1px solid #5a7898; border-left: 0; border-top: 0; }
.clip { width: 112px; }
.font { width: 316px; }
.para { width: 244px; }
.styles { width: 1090px; }
.edit { width: 68px; }
.big { flex-direction: column; justify-content: flex-start; gap: 4px; padding-top: 3px; width: 46px; }
.big .dd { margin-top: 4px; }
.stack { display: flex; flex-direction: column; padding: 1px 0 0 2px; }
.stack button { height: 22px; gap: 3px; justify-content: flex-start; }
.edit .stack { padding-left: 5px; }
.edit .dd { margin-left: 3px; }

.rows { flex-direction: column; padding: 11px 3px 0; gap: 13px; }
.row { display: flex; gap: 4px; height: 22px; }
.bg { display: flex; border: 1px solid #92aed6; border-radius: 3px; background: linear-gradient(#dbe6f4, #cfdcee 50%, #c2d3ea 50%, #d4e2f2); }
.bg button { width: 21px; }
.bg button + button { border-left: 1px solid #b8cbe4; }
.bg button.w32 { width: 32px; gap: 3px; }
.bg button.w30 { width: 29px; gap: 2px; }
.al button { width: 23px; }
.al .sel { background: linear-gradient(#fbd48a, #fbb85a 50%, #fdd060 60%, #ffe890); }
.combos { display: flex; height: 25px; }
.combos select { appearance: none; border: 1px solid #abc1de; background: #eaf2fb url('data:image/svg+xml,<svg xmlns="http://www.w3.org/2000/svg" width="6" height="4"><path d="M0 0h6l-3 4z" fill="%235a7fb5"/></svg>') no-repeat right 4px center; color: #000; padding-left: 2px; }
.combos .fname { width: 124px; }
.combos .fsize { width: 54px; border-left: 0; }
.s { font: bold 14px/16px "Liberation Serif", serif; color: #222; }
.s sub, .s sup { font: 8px/8px "Liberation Sans", sans-serif; color: #2f5fb4; }
.s sup { align-self: flex-start; }
.s sub { align-self: flex-end; }
.s.it { font-style: italic; }
.bg .st { text-decoration: line-through; font-size: 13px; width: 27px; }
.bg .aa { width: 34px; gap: 2px; }
.bg .big-a { font-size: 16px; }
.bg .small-a { font-size: 13px; }
.bg .boxed span { border: 1px solid #223; padding: 0 2px; }
.bg .shade span { background: #a8a8a8; padding: 0 3px; }
.circ span { border: 1px solid #223; border-radius: 8px; color: #111; width: 16px; height: 16px; line-height: 14px; font-size: 11px; }
.py { flex-direction: column; color: #1c3c98; }
.py small { font: bold 8px/7px "Liberation Sans", sans-serif; color: #222; }
.py b { font-size: 11px; line-height: 11px; }

.gallery { display: flex; gap: 8px; margin: 4px 0 0 4px; padding: 4px 4px 6px; height: 60px; border: 1px solid #b6cfee; background: #d5e5f8; }
.gallery button { width: 64px; flex-direction: column; justify-content: flex-end; background: #fff; color: #14146e; overflow: hidden; }
.gallery small { font-size: 9px; }
.gallery .cur { outline: 3px solid #f0b050; box-shadow: 0 0 0 4px #a08050; overflow: visible; }
.pv { width: 58px; height: 32px; overflow: hidden; text-align: left; font: 14px/32px "Liberation Serif", serif; color: #000; }
.pv.p21 { font-size: 20px; font-weight: bold; }
.pv.p26 { font-size: 26px; font-weight: bold; }
.pv.bd { font-weight: bold; font-size: 14px; }
.pv.it { font-style: italic; font-size: 14px; }
.pv.gray { color: #8c8c8c; }
.pv.blue { color: #4f81bd; }
.pv.ul { border-bottom: 1px solid #4f81bd; height: 26px; margin-bottom: 6px; line-height: 30px; }
.pv.red { color: #c0504d; }
.pv.sc { font-variant: small-caps; font-size: 14px; }
.gscroll { display: flex; flex-direction: column; width: 15px; height: 60px; margin-top: 4px; }
.gscroll button { flex: 1; border: 1px solid #b0c8e6; background: linear-gradient(#e4eefa, #c8daf2); }
.gscroll button:first-child { background: #e8e8e6; }
.change { width: 60px; }

/* ruler */
.rulerrow { flex: none; display: flex; height: 24px; border-top: 1px solid #b8d0ec; background: #9cbae0; }
.tabstop { width: 24px; border: 1px solid #5a80c8; background: #b4cdf2; }
.hruler { position: relative; width: 953px; margin: 5px auto 0; height: 18px; display: flex; align-items: flex-start; font: 10px/12px "Liberation Sans", sans-serif; color: #333; }
.hruler b { font-weight: normal; flex: 1; display: flex; justify-content: space-between; align-items: center; padding: 0 8px; position: relative; }
.hruler b::before, .hruler b::after, .hmargin i { content: ""; width: 1px; height: 4px; background: #555; }
.hwhite b { background: linear-gradient(#67809f, #67809f) no-repeat center bottom / 1px 3px; padding-bottom: 5px; }
.hwhite { flex: 1; height: 17px; display: flex; padding: 0 12px 0 17px; background: linear-gradient(#fff, #fff) no-repeat 0 0 / 100% 12px; }
.hmargin { height: 12px; display: flex; align-items: center; border: 1px solid #d8e6f6; background: #b4cbe8; }
.hmargin.l { width: 57px; padding: 0 8px 0 6px; }
.hmargin.r { width: 63px; padding: 0 8px 0 14px; }
.hmargin.l b, .hmargin.r b { padding: 0 7px; }
.mk { position: absolute; }
.mk.lm { left: 53px; top: -2px; }
.mk.rm { right: 58px; top: 5px; }
.corner { width: 17px; display: flex; flex-direction: column; align-items: center; gap: 3px; }
.corner i { width: 10px; height: 2px; margin-top: 2px; background: #2c4470; }
.corner button { border: 1px solid #8090a8; background: #e4e8f0; width: 16px; height: 16px; }

/* document area */
.work { flex: 1; min-height: 0; display: flex; overflow: hidden; }
.vruler { width: 23px; padding: 0 5px; background: #9cbae0; overflow: hidden; }
.vnums { background: #fff; width: 13px; margin-top: -8px; }
.vnums b { display: flex; align-items: center; justify-content: center; height: 25px; writing-mode: vertical-rl; transform: rotate(180deg); font: 10px/12px "Liberation Sans", sans-serif; color: #333; position: relative; }
.vnums b::after { content: ""; position: absolute; top: 0; left: 4px; width: 5px; height: 1px; background: #444; }
.canvas { position: relative; flex: 1; overflow: hidden; background: linear-gradient(#a0bee8, #8eaddb 15%, #789bc8 35%, #5178ac 75%, #6590cc); }
.swoosh { position: absolute; left: 0; top: 0; }
.page { position: relative; width: 952px; min-height: 100%; margin: 0 auto; background: #fff; box-shadow: 2px 0 7px 1px #26395acc; overflow: hidden; }
.ret { display: inline-block; flex: none; width: 9px; height: 9px; background: url('data:image/svg+xml,<svg xmlns="http://www.w3.org/2000/svg" width="9" height="9"><path d="M6 .5h2v5H1.500M3.500 3L1 5.500 3.500 8" fill="none" stroke="%23808080"/></svg>') no-repeat; }
.toprow { display: flex; align-items: flex-end; gap: 2px; padding-left: 48px; height: 34px; }
.toprow > .ret { margin-bottom: 9px; }
.t1 { table-layout: fixed; border-collapse: collapse; width: 834px; height: 33px; align-self: flex-start; }
.t1 td { border: 1px solid #000; padding: 4px 0 0; text-align: center; width: 145px; line-height: 9px; }
.t1 td:nth-child(2) { width: 238px; }
.t1 td:nth-child(3) { width: 242px; }
.t1 td:nth-child(4) { width: 208px; }
.t1 td.early { padding-right: 98px; }
.t1 .cut td { height: 6px; padding: 0; border-top: 0; }
.text { padding: 0 59px 0 58px; font: 17px/25px "Liberation Serif", "Noto Sans CJK SC", serif; font-weight: 350; color: #0000b4; white-space: nowrap; }
.text p, .text h2 { margin: 0; height: 25px; }
.text p::after, .text h2::after { content: ""; display: inline-block; width: 9px; height: 9px; margin-left: 1px; background: url('data:image/svg+xml,<svg xmlns="http://www.w3.org/2000/svg" width="9" height="9"><path d="M6 .5h2v5H1.500M3.500 3L1 5.500 3.500 8" fill="none" stroke="%23808080"/></svg>') no-repeat; }
.text p.full { text-align: justify; text-align-last: justify; }
.text p.full::after { display: none; }
.text h2 { font-size: 19px; font-weight: bold; color: #0000d8; line-height: 24px; }
.text code { font: bold 16px/24px "Liberation Mono", monospace; }
.text .hd { font-weight: bold; font-size: 20px; }
.text .hd::after { margin-left: 5px; }
.text mark { display: inline-block; height: 25px; background: #f00; color: #300000; }
.text .in20 { padding-left: 20px; }
.text .in25 { padding-left: 25px; }
.text .in28 { padding-left: 28px; }
.text .in34 { padding-left: 34px; }
.text .in38 { padding-left: 38px; }
.text .in60 { padding-left: 60px; }
.text .lg, .lgi { font-size: 19px; color: #2020cc; }
.pick { display: inline-block; height: 25px; background: #a8ccf0; padding-right: 10px; margin-right: -10px; color: #1a34d0; }
q { quotes: none; font-family: "Noto Sans CJK SC", sans-serif; line-height: 1; }
q::before, q::after { content: none; }
q.em { display: inline-block; width: 17px; text-align: center; }
s { text-decoration: none; font-feature-settings: "halt"; }
u.g { text-decoration: underline wavy #2a8a3a 1px; text-underline-offset: 2px; }
u.r { text-decoration: underline wavy #e03030 1px; text-underline-offset: 2px; }
.figure { display: flex; align-items: flex-end; gap: 7px; padding: 16px 0 12px 79px; }
.t2 { table-layout: fixed; border-collapse: collapse; width: 805px; font: 16px/36px "Liberation Mono", "Noto Sans CJK SC", monospace; color: #222; }
.t2 td { border: 1px solid #111; padding: 0; height: 42px; text-align: center; white-space: nowrap; }
.t2 tr td:first-child, .t2 .tall td:last-child { font-size: 18px; }
.t2 .tall td { height: 83px; line-height: 40px; }
.caret { display: inline-block; width: 1px; height: 18px; background: #222; vertical-align: middle; }

/* scroll bar */
.vscroll { width: 17px; display: flex; flex-direction: column; background: #9cbae0; }
.vscroll button { height: 17px; }
.track { flex: 1; padding: 41px 1px 0; background: linear-gradient(90deg, #6a8cc0, #86a4d4); }
.thumb { height: 152px; border: 1px solid #4c6ca4; border-radius: 2px; background: linear-gradient(#5878a8, #5878a8) no-repeat center 72px / 7px 1px, linear-gradient(#5878a8, #5878a8) no-repeat center 75px / 7px 1px, linear-gradient(#5878a8, #5878a8) no-repeat center 78px / 7px 1px, linear-gradient(90deg, #e4eefa, #c4d6f0 50%, #a8c2e6); }
.tri { display: block; border: 4px solid transparent; border-top: 5px solid #1c3460; border-bottom: 0; }
.tri.up { border-top: 0; border-bottom: 5px solid #1c3460; }
.tri.up.w { border-bottom-color: #fff; }

/* status bar */
.status { flex: none; height: 22px; display: flex; align-items: center; border-top: 1px solid #56749c; background: linear-gradient(#dfeafa, #cfe0f6 40%, #b4cef2 45%, #c8dcf6); }
.status span { display: flex; align-items: center; height: 20px; border-right: 1px solid #9ab4dc; padding-left: 8px; }
.status .c1 { width: 67px; }
.status .c2 { width: 100px; }
.status .c3 { width: 142px; gap: 16px; padding-left: 7px; }
.status .c4 { width: 42px; }
.views { display: flex; margin-left: auto; border: 1px solid #8cacd8; border-radius: 3px; }
.views button { width: 18px; height: 17px; }
.views .on { background: #fcd890; }
.pct { width: 51px; padding-left: 9px; }
.zb { width: 15px; height: 15px; border: 1px solid #5c7498; border-radius: 50%; background: #eef3fb; color: #223a60; line-height: 12px; }
.zoom { appearance: none; width: 104px; height: 15px; background: linear-gradient(#7088b0, #7088b0) no-repeat center / 100% 1px; }
.zoom::-webkit-slider-thumb { appearance: none; width: 9px; height: 13px; border: 1px solid #5c7498; border-radius: 1px 1px 5px 5px; background: #eef3fb; }
.status > :last-child { margin-right: 5px; }

/* taskbar */
.taskbar { flex: none; height: 40px; display: flex; align-items: center; color: #fff; border-top: 1px solid #0a1a30; background: linear-gradient(90deg, #0a2444, #1a3c64 6%, #183a66 30%, #0c3468 45%, #06264e 75%, #10284a 90%); }
.start { width: 58px; padding-right: 4px; }
.tasks { display: flex; gap: 4px; margin-left: 2px; }
.tasks button { width: 58px; height: 38px; border: 1px solid #86a0bc; border-radius: 3px; background: linear-gradient(135deg, #8ea8c4, #3c5c84 50%, #24446c 50%, #3a5a84); box-shadow: inset 0 0 0 1px #ffffff22; }
.tasks .active { background: linear-gradient(135deg, #e4ecf4, #a4b8d0 50%, #8ca4c0 50%, #b4c8dc); }
.tasks .multi { padding-right: 5px; box-shadow: inset -3px 0 #1a3458, inset -4px 0 #86a0bc; }
.ime { display: flex; align-items: center; gap: 5px; margin-left: auto; padding-bottom: 5px; }
.ime span { font-size: 14px; }
.tray { display: flex; align-items: center; gap: 7px; margin-left: 15px; }
.tray .tri { margin-right: 6px; }
.clock { width: 83px; text-align: center; line-height: 18px; }
.clock time { display: block; }
.desk { width: 14px; height: 38px; border: 1px solid #5a7898; background: linear-gradient(135deg, #5a708c, #12263e); }
```
